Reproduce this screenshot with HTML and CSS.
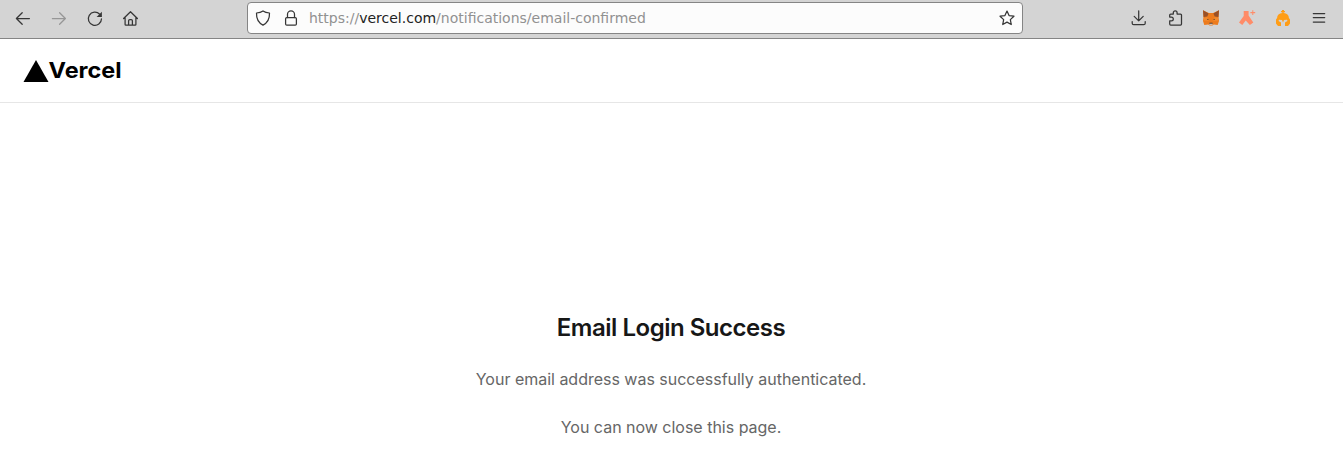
FILE: index.html
```html
<!DOCTYPE html>
<html lang="en">
<head>
<meta charset="utf-8">
<title>Email Login Success</title>
<link rel="stylesheet" href="styles.css">
</head>
<body>
<nav class="toolbar">
  <div class="nav-buttons">
    <svg class="icon" viewBox="0 0 16 16"><path d="M14.4 8.500H1.400M7.200 2.700L1.400 8.500l5.800 5.800"/></svg>
    <svg class="icon icon-disabled" viewBox="0 0 16 16"><path d="M1.400 8.500h13M8.600 2.700l5.800 5.800-5.800 5.800"/></svg>
    <svg class="icon" viewBox="0 0 16 16"><path d="M12.700 4.200A6.600 6.600 0 1 0 14.500 8.800"/><path class="solid" d="M14.900 1.800v5.300H9.600z"/></svg>
    <svg class="icon" viewBox="0 0 16 16"><path d="M.6 8.500l6.900-6.800 6.900 6.800M2.100 7.200v7.200q0 .8.800.8h9.200q.8 0 .8-.8V7.200M5.600 15v-4.300q0-1.200 1.200-1.200h1.400q1.200 0 1.200 1.200V15"/></svg>
  </div>
  <div class="urlbar">
    <svg class="icon" viewBox="0 0 16 16"><path d="M8 .9c2 1.400 4.200 1.900 6.500 2.100C14.700 8.500 12.500 12.800 8 15.100 3.500 12.800 1.300 8.500 1.500 3 3.800 2.800 6 2.300 8 .9z"/></svg>
    <svg class="icon" viewBox="0 0 16 16"><rect x="2.600" y="7.600" width="10.800" height="7.600" rx="1.200"/><path d="M4.500 7.500V4.300a3.500 3.500 0 0 1 7 0v3.200"/></svg>
    <span class="url">https://<b>vercel.com</b>/notifications/email-confirmed</span>
    <svg class="icon" viewBox="0 0 16 16"><path d="M8 1.100l2.050 4.500 4.900.6-3.600 3.400.9 4.900L8 12.100l-4.250 2.400.9-4.900-3.600-3.400 4.900-.6z"/></svg>
  </div>
  <div class="extensions">
    <svg class="icon" viewBox="0 0 16 16"><path d="M7.700 .8v10M3.200 6.400l4.500 4.500 4.500-4.500M1.200 11.500v1.700q0 1.500 1.500 1.500h10q1.500 0 1.500-1.500v-1.700"/></svg>
    <svg class="icon" viewBox="0 0 16 16"><path d="M2.700 7V5q0-1 1-1h2.600V2.700a1.900 1.900 0 0 1 3.800 0V4h3.400q1 0 1 1v9q0 1-1 1H3.700q-1 0-1-1v-3.200h1.700a1.900 1.900 0 0 0 0-3.800z"/></svg>
    <svg class="icon plain" viewBox="0 0 16 16"><path fill="#ed7b1c" d="M0 .2l5.800 2.900h4.400L16 .2l-.4 7.200.4 3.600-1.300 4-4-.6L9.500 15.600h-3l-1.200-1.200-4 .6L0 11l.4-3.600z"/><path fill="#985028" d="M0 .2l5.600 3.200L4.300 6.500.6 7zM16 .2l-5.600 3.200 1.300 3.100 3.700.5z"/><path fill="#f28a2e" d="M1 8l3.300-1 1.500 4L1 10.500zM15 8l-3.300-1-1.500 4 4.800-.5z"/><path fill="#39332f" d="M4.300 8.700l1.700 1.200-1.800-.2zM11.700 8.700L10 9.900l1.800-.2zM6.500 12.700h3l.3 1.100H6.200z"/><path fill="#d5bfb2" d="M6.200 13.800h3.600l-.4 1.100H6.600z"/></svg>
    <svg class="icon plain" viewBox="0 0 16 16"><path fill="#ff8c68" d="M4.700 1.100h4.900v4.500l4.700 6.900-3.400 2.600-4.200-4.600-3.400 4.600L0 12.500l4.700-6.400zM13.300.2h1v1.900h1.900v1.100h-1.900v1.900h-1V3.200h-1.900V2.100h1.900z"/></svg>
    <svg class="icon plain" viewBox="0 0 16 16"><path fill="#ff9d16" d="M7 0h2v1h1v1.200H8.700v.9c3.200.2 5.200 2.100 5.200 4.900l1.100 1.500v4L13 16h-3v-3.500l2.500-1.500-.5-1.300-3 .2-1 2.500-1-2.500-3-.2L3.500 11 6 12.500V16H3l-2-2.500v-4L2.100 8c0-2.800 2-4.700 5.200-4.900v-.9H6V1h1z"/></svg>
    <svg class="icon" viewBox="0 0 16 16"><path d="M2.300 3.500h11.400M2.300 7.500h11.400M2.300 12h11.400"/></svg>
  </div>
</nav>
<header class="site-header">
  <svg class="logo" viewBox="0 0 104 36" role="img" aria-label="Vercel"><path d="M13 7l12.500 22H.5z"/><text x="25.600" y="24.600" textLength="73" lengthAdjust="spacingAndGlyphs">Vercel</text></svg>
</header>
<main class="message">
  <h1>Email Login Success</h1>
  <p>Your email address was successfully authenticated.</p>
  <p>You can now close this page.</p>
</main>
</body>
</html>
```
FILE: styles.css
```css
* { box-sizing: border-box; }
body { margin: 0; height: 452px; overflow: hidden; background: #fff; font-family: Inter, sans-serif; }
.toolbar { display: flex; height: 39px; padding: 2px 16px 0 15px; background: #d4d4d4; border-bottom: 1px solid #858585; }
.nav-buttons { display: flex; gap: 20px; width: 232px; padding-top: 8px; }
.icon { display: block; flex: none; width: 16px; height: 16px; overflow: visible; fill: none; stroke: #363636; stroke-width: 1.25; stroke-linecap: round; stroke-linejoin: round; }
.icon-disabled { stroke: #969696; }
.icon .solid { fill: #363636; stroke: none; }
.icon.plain { stroke: none; }
.urlbar { display: flex; align-items: center; gap: 12px; width: 776px; height: 32px; padding: 0 7px; background: #fcfcfc; border: 1px solid #858585; border-radius: 4px; }
.url { flex: 1; margin-left: -2px; color: #919191; font: 14px/20px "DejaVu Sans", sans-serif; white-space: nowrap; }
.url b { color: #222; font-weight: 400; }
.extensions { display: flex; gap: 20px; margin-left: auto; padding-top: 8px; }
.site-header { height: 64px; padding: 14px 23px; border-bottom: 1px solid #e6e6e6; }
.logo { display: block; width: 104px; height: 36px; fill: #000; }
.logo text { font: 650 21.500px Inter, sans-serif; }
.message { padding: 209px 1px 0 0; text-align: center; }
h1 { margin: 0; color: #171717; font-size: 24px; font-weight: 600; line-height: 32px; letter-spacing: -0.48px; }
p { margin: 0; color: #666; font-size: 16px; line-height: 24px; letter-spacing: -0.012px; }
h1 + p { margin: 23px 0 24px; }
```
